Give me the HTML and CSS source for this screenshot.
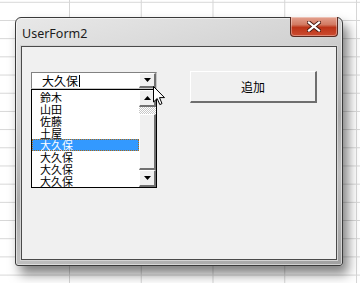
FILE: index.html
```html
<!DOCTYPE html>
<html lang="ja">
<head>
  <meta charset="UTF-8" />
  <title>UserForm2</title>
  <link rel="stylesheet" href="styles.css">
</head>
<body>

  <div class="window">
    <div class="titlebar">
      <span class="title">UserForm2</span>
      <span class="close">
        <svg width="14" height="11" viewBox="0 0 14 11">
          <path d="M2 1.5 L12 9.5 M12 1.5 L2 9.5" stroke="#4a1a10" stroke-width="4" stroke-linecap="square"/>
          <path d="M2 1.5 L12 9.5 M12 1.5 L2 9.5" stroke="#fff" stroke-width="2.2" stroke-linecap="square"/>
        </svg>
      </span>
    </div>

    <div class="client">
      <div class="combo">
        <div class="combo-field">
          <span class="combo-text">大久保</span><span class="caret"></span>
          <span class="drop-btn">
            <svg width="7" height="4" viewBox="0 0 7 4"><path d="M0 0 H7 L3.5 4 Z" fill="#000"/></svg>
          </span>
        </div>

        <div class="droplist">
          <ul class="items">
            <li>鈴木</li>
            <li>山田</li>
            <li>佐藤</li>
            <li>土屋</li>
            <li class="selected">大久保</li>
            <li>大久保</li>
            <li>大久保</li>
            <li>大久保</li>
          </ul>
          <div class="vscroll">
            <span class="sb-btn">
              <svg width="7" height="4" viewBox="0 0 7 4"><path d="M0 4 H7 L3.5 0 Z" fill="#000"/></svg>
            </span>
            <span class="sb-track"></span>
            <span class="sb-thumb"></span>
            <span class="sb-btn">
              <svg width="7" height="4" viewBox="0 0 7 4"><path d="M0 0 H7 L3.5 4 Z" fill="#000"/></svg>
            </span>
          </div>
        </div>
      </div>

      <button class="add">追加</button>
    </div>
  </div>

  <svg class="cursor" width="13" height="20" viewBox="0 0 13 20">
    <path d="M0.5 0.5 V16 L4.2 12.5 L6.8 18.6 L9 17.6 L6.5 11.6 L11.5 11.6 Z" fill="#fff" stroke="#000" stroke-width="1" stroke-linejoin="miter"/>
  </svg>

</body>
</html>
```

FILE: styles.css
```css
html, body {
  margin: 0;
  width: 360px;
  height: 283px;
  overflow: hidden;
}
body {
  position: relative;
  font-family: "Noto Sans", "Noto Sans CJK JP", sans-serif;
  background-color: #fff;
  background-image:
    linear-gradient(to right, #d6d6d6 1px, transparent 1px),
    linear-gradient(to bottom, #d6d6d6 1px, transparent 1px);
  background-size: 71.75px 18.2px;
  background-position: 69px 1.8px;
  padding-top: 17px;
  box-sizing: border-box;
}

/* ventana */
.window {
  margin-left: 15px;
  width: 328px;
  height: 249px;
  box-sizing: border-box;
  border: 1px solid #3a3a3a;
  border-radius: 6px 6px 3px 3px;
  padding: 0 5px 5px;
  display: flex;
  flex-direction: column;
  background: linear-gradient(165deg, #e8e8e8 0%, #d2d2d2 30%, #aaaaaa 55%, #c0c0c0 72%, #a0a0a0 100%);
  box-shadow: 5px 8px 12px rgba(0,0,0,0.5), inset 0 0 0 1px rgba(255,255,255,0.5);
}
.titlebar {
  height: 28px;
  display: flex;
  align-items: flex-start;
  justify-content: space-between;
}
.title {
  margin-top: 7px;
  padding-left: 1px;
  font-size: 12.5px;
  color: #1c1c1c;
}
.close {
  margin-top: -1px;
  margin-right: -1px;
  width: 48px;
  height: 20px;
  box-sizing: border-box;
  border: 1px solid #5a2a20;
  border-top: none;
  border-radius: 0 0 4px 4px;
  background: linear-gradient(to bottom, #e4a290 0%, #d27a62 40%, #bc3418 55%, #cc4c30 100%);
  box-shadow: inset 0 0 0 1px rgba(255,255,255,0.35);
  display: flex;
  align-items: center;
  justify-content: center;
}
.client {
  flex: 1;
  background: #f0f0f0;
  border: 1px solid #4a4a4a;
  box-shadow: 0 0 0 1px #d4d4d4;
  display: flex;
  align-items: flex-start;
  padding: 25px 0 0 9px;
  gap: 33px;
  font-family: "Noto Sans CJK JP", sans-serif;
  font-size: 12px;
}

/* combo */
.combo {
  position: relative;
  width: 126px;
}
.combo-field {
  height: 17px;
  box-sizing: border-box;
  border: 1px solid #828282;
  border-right-color: #c8c8c8;
  border-bottom-color: #c8c8c8;
  background: #fff;
  display: flex;
  align-items: center;
  padding-left: 10px;
}
.combo-text {
  line-height: 14px;
  color: #000;
}
.caret {
  width: 1px;
  height: 12px;
  background: #000;
  margin-left: 1px;
}
.drop-btn {
  margin-left: auto;
  width: 17px;
  height: 15px;
  box-sizing: border-box;
  background: #f0f0f0;
  border: 1px solid #fff;
  border-right: 2px solid #707070;
  border-bottom: 2px solid #707070;
  display: flex;
  align-items: center;
  justify-content: center;
}
.droplist {
  position: absolute;
  top: 17px;
  left: 0;
  width: 126px;
  height: 99px;
  box-sizing: border-box;
  border: 1px solid #000;
  background: #fff;
  display: flex;
}
.items {
  list-style: none;
  margin: 0;
  padding: 1px 0 0;
  flex: 1;
}
.items li {
  height: 12px;
  line-height: 12px;
  font-size: 11px;
  padding-left: 8px;
  color: #000;
}
.items li.selected {
  background: #3399ff;
  color: #fff;
  outline: 1px dotted #b06a10;
  outline-offset: -1px;
}
.vscroll {
  width: 17px;
  display: flex;
  flex-direction: column;
  background: #f0f0f0;
}
.sb-btn {
  height: 17px;
  box-sizing: border-box;
  border: 1px solid #fff;
  border-right: 2px solid #707070;
  border-bottom: 2px solid #707070;
  display: flex;
  align-items: center;
  justify-content: center;
}
.sb-track {
  height: 7px;
  background-image: repeating-conic-gradient(#c8c8c8 0 25%, #fff 0 50%);
  background-size: 2px 2px;
}
.sb-thumb {
  flex: 1;
  box-sizing: border-box;
  border: 1px solid #fff;
  border-right: 2px solid #707070;
  border-bottom: 2px solid #707070;
}

/* boton */
.add {
  margin-top: -1px;
  width: 127px;
  height: 32px;
  box-sizing: border-box;
  background: #f0f0f0;
  border: 1px solid #fff;
  border-right: 2px solid #6e6e6e;
  border-bottom: 2px solid #6e6e6e;
  font-family: "Noto Sans CJK JP", sans-serif;
  font-size: 12px;
  color: #000;
  padding: 0;
}

.cursor {
  position: absolute;
  left: 153px;
  top: 86px;
}
```
